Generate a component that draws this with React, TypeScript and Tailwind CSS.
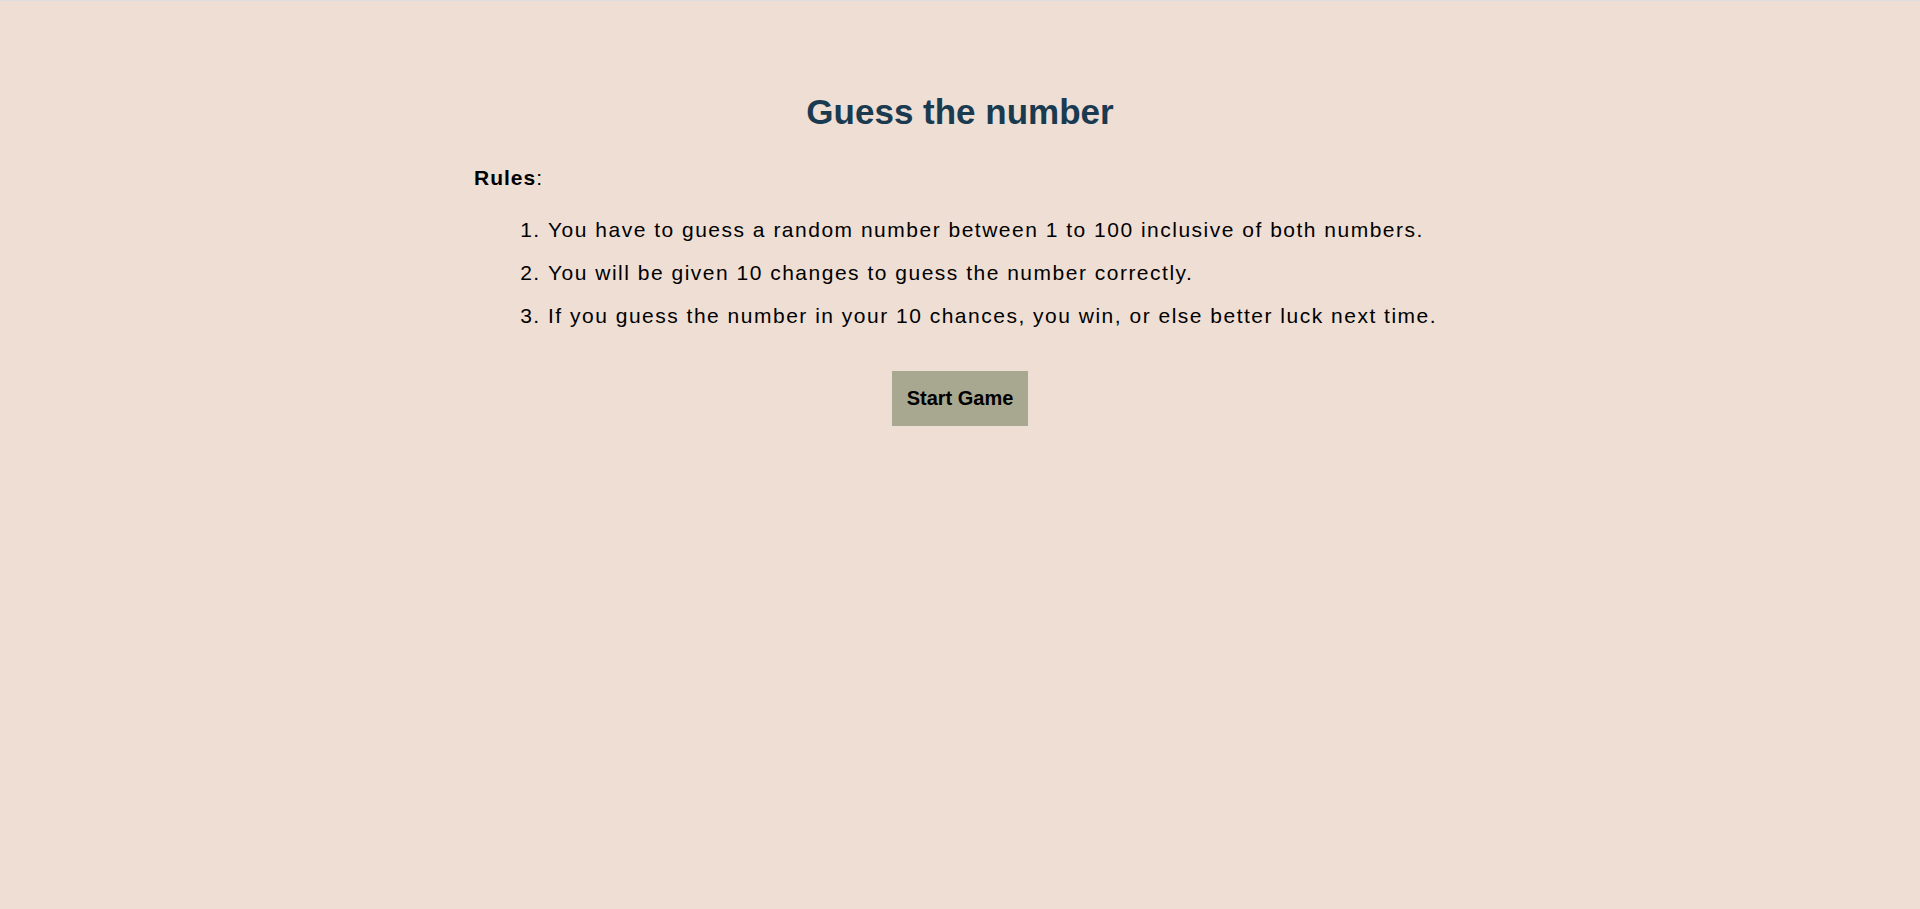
export default function App() {
  const rules = [
    "You have to guess a random number between 1 to 100 inclusive of both numbers.",
    "You will be given 10 changes to guess the number correctly.",
    "If you guess the number in your 10 chances, you win, or else better luck next time.",
  ];

  return (
    <div className="min-h-screen bg-[#eeded4] border-t border-[#dddddd] font-['Liberation_Sans',Arial,sans-serif] text-black">
      <div className="w-[972px] mx-auto pt-[91px]">
        {/* Title */}
        <h1 className="text-center text-[35px] leading-[40px] font-bold text-[#1a3a4f]">Guess the number</h1>

        {/* Rules */}
        <p className="mt-[33px] text-[21px] leading-[26px] tracking-[1px]">
          <b>Rules</b>:
        </p>
        <ol className="list-decimal pl-[74px] mt-[17px] text-[21px] leading-[43px] tracking-[1.5px]">
          {rules.map((rule, index) => (
            <li key={index}>{rule}</li>
          ))}
        </ol>

        <div className="flex justify-center mt-[34px]">
          <button className="bg-[#a8a890] text-[20px] leading-[23px] font-bold px-[15px] py-[16px]">Start Game</button>
        </div>
      </div>
    </div>
  );
}
